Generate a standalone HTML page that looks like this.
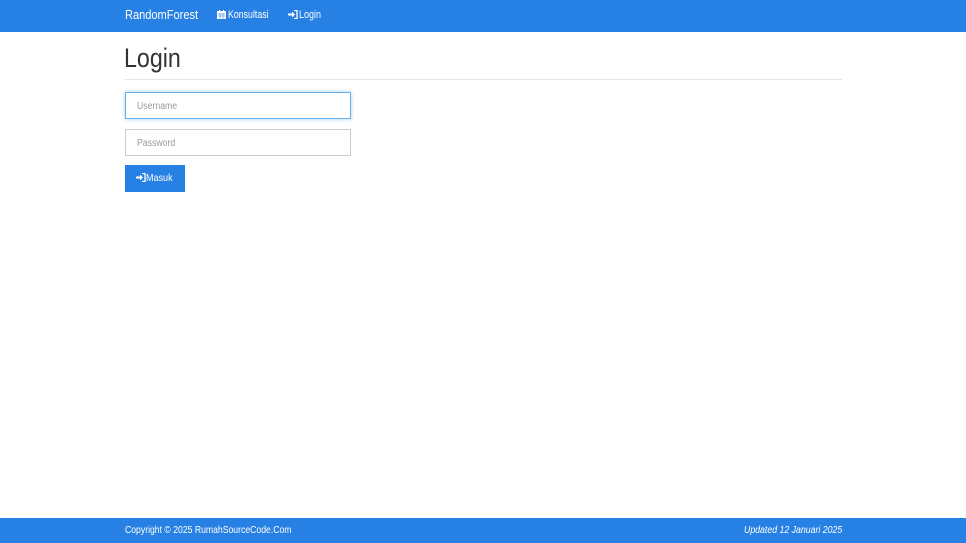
<!DOCTYPE html>
<html><head><meta charset="utf-8"><style>
*{box-sizing:border-box}
body{margin:0;width:966px;height:543px;position:relative;background:#fff;font-family:"Liberation Sans",sans-serif;overflow:hidden}
.nav{position:absolute;left:0;top:0;width:966px;height:32px;background:#2780e3;color:#fff}
.nav>span{position:absolute;top:9px;font-size:11px;white-space:nowrap}
.sx{display:inline-block;transform:scaleX(.82);transform-origin:left center;white-space:nowrap}
.brand{left:125px;top:7px!important;font-size:13px!important}
h1{position:absolute;left:124px;top:43px;margin:0;font-weight:normal;font-size:27px;color:#333}
.hr{position:absolute;left:125px;top:79px;width:717px;height:1px;background:#e6e6e6}
.in{position:absolute;left:125px;width:226px;height:27px;border:1px solid #ccc;font-size:10px;color:#999;padding:8px 11px}
.btn{position:absolute;left:125px;top:165px;width:60px;height:27px;background:#2780e3;color:#fff;font-size:10.5px;padding:7px 0 0 11px;white-space:nowrap}
.foot{position:absolute;left:0;top:518px;width:966px;height:25px;background:#2780e3;color:#fff;font-size:10px}
svg{vertical-align:-1px}
</style></head><body>
<div class="nav">
<span class="brand"><span class="sx" style="transform:scaleX(.85)">RandomForest</span></span>
<span style="left:217px"><svg width="9" height="9" viewBox="0 0 9 9"><rect x="0" y="1" width="9" height="8" fill="#fff"/><rect x="2" y="0" width="1" height="2" fill="#fff"/><rect x="6" y="0" width="1" height="2" fill="#fff"/><path d="M1 4h7M1 6h7M3 3v6M6 3v6" stroke="#2780e3" stroke-width=".5"/></svg></span>
<span style="left:228px"><span class="sx" style="transform:scaleX(.8)">Konsultasi</span></span>
<span style="left:288px"><svg width="10" height="9" viewBox="0 0 10 9"><path d="M0 3.5h4V1.5l3 3-3 3V5.5H0z" fill="#fff"/><path d="M6 .5h3v8H6" stroke="#fff" stroke-width="1.3" fill="none"/></svg></span>
<span style="left:299px"><span class="sx">Login</span></span>
</div>
<h1><span class="sx" style="transform:scaleX(.86)">Login</span></h1>
<div class="hr"></div>
<div class="in" style="top:92px;border-color:#66afe9;box-shadow:0 0 4px rgba(102,175,233,.6)"><span class="sx" style="transform:scaleX(.87)">Username</span></div>
<div class="in" style="top:129px"><span class="sx" style="transform:scaleX(.87)">Password</span></div>
<div class="btn"><svg width="10" height="9" viewBox="0 0 10 9"><path d="M0 3.5h4V1.5l3 3-3 3V5.5H0z" fill="#fff"/><path d="M6 .5h3v8H6" stroke="#fff" stroke-width="1.3" fill="none"/></svg><span class="sx" style="transform:scaleX(.86)">Masuk</span></div>
<div class="foot"><span class="sx" style="position:absolute;left:125px;top:7px;transform:scaleX(.865)">Copyright © 2025 RumahSourceCode.Com</span><span class="sx" style="position:absolute;left:744px;top:7px;font-style:italic;transform:scaleX(.875)">Updated 12 Januari 2025</span></div>
</body></html>
